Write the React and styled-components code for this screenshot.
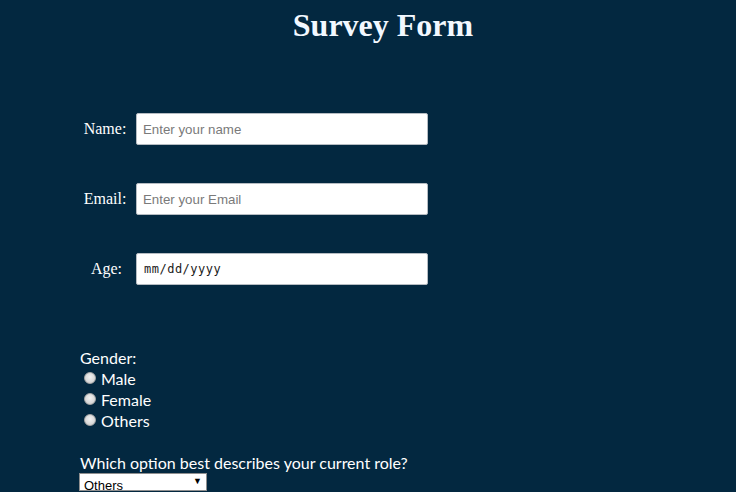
import styled, { createGlobalStyle } from 'styled-components'

const Global = createGlobalStyle`
  html, body {
    margin: 0;
    padding: 0;
    background: #032840;
    overflow: hidden;
  }
`

const Page = styled.div`
  width: 736px;
  height: 492px;
  background: #032840;
  color: #fff;
  overflow: hidden;
`

const Title = styled.h1`
  margin: 0;
  padding: 7px 0 0 30px;
  text-align: center;
  font-family: "Liberation Serif", serif;
  font-size: 32px;
  font-weight: bold;
  line-height: 37px;
  color: #f2f8ff;
`

const Fields = styled.div`
  display: flex;
  flex-direction: column;
  gap: 38px;
  padding: 69px 0 0 74px;
`

const Row = styled.div`
  display: grid;
  grid-template-columns: 62px 292px;
  align-items: center;
`

const Label = styled.label`
  font-family: "Liberation Serif", serif;
  font-size: 16px;
  text-align: center;
  padding-left: ${({ shift }) => shift || 0}px;
  color: #fff;
`

const TextInput = styled.input`
  box-sizing: border-box;
  width: 292px;
  height: 32px;
  margin: 0;
  padding: 0 6px;
  border: 1px solid #b6bcc2;
  border-radius: 2px;
  background: #fff;
  font-family: "Liberation Sans", Arial, sans-serif;
  font-size: 13.3px;
  color: #222;
  outline: none;

  &::placeholder {
    color: #7a7a7a;
  }
`

const DateInput = styled(TextInput)`
  font-family: "DejaVu Sans Mono", monospace;
  font-size: 12px;
  letter-spacing: 0.5px;
  color: #1a1a1a;
  padding-left: 7px;
`

const Section = styled.div`
  padding: 62px 0 0 80px;
  font-family: Lato, "Open Sans", sans-serif;
  font-size: 16px;
  color: #fff;
`

const GroupTitle = styled.div`
  line-height: 21px;
`

const Option = styled.label`
  display: flex;
  align-items: center;
  height: 21px;
  padding-left: 4px;
`

const Radio = styled.span`
  box-sizing: border-box;
  width: 12px;
  height: 12px;
  border-radius: 50%;
  background: radial-gradient(circle at 50% 40%, #f2f2f2, #c9c9c9);
  border: 1px solid #a8a8a8;
  margin-right: 5px;
  margin-top: -2px;
`

const Question = styled.div`
  margin-top: 22px;
  line-height: 20px;
`

const SelectBox = styled.div`
  position: relative;
  box-sizing: border-box;
  width: 128px;
  height: 18px;
  margin-top: 0;
  margin-left: -1px;
  background: #fff;
  border: 1px solid #8f8f8f;
`

const Select = styled.select`
  appearance: none;
  width: 100%;
  height: 100%;
  border: none;
  margin: 0;
  padding: 0 0 0 4px;
  background: transparent;
  font-family: "Liberation Sans", Arial, sans-serif;
  font-size: 13px;
  color: #000;
  outline: none;
`

const Arrow = styled.span`
  position: absolute;
  right: 4px;
  top: 1px;
  font-size: 9px;
  color: #000;
  pointer-events: none;
`

export default function App() {
  return (
    <Page>
      <Global />
      <Title>Survey Form</Title>
      <Fields>
        <Row>
          <Label>Name:</Label>
          <TextInput placeholder="Enter your name" />
        </Row>
        <Row>
          <Label>Email:</Label>
          <TextInput placeholder="Enter your Email" />
        </Row>
        <Row>
          <Label shift={3}>Age:</Label>
          <DateInput defaultValue="mm/dd/yyyy" />
        </Row>
      </Fields>
      <Section>
        <GroupTitle>Gender:</GroupTitle>
        <Option><Radio />Male</Option>
        <Option><Radio />Female</Option>
        <Option><Radio />Others</Option>
        <Question>Which option best describes your current role?</Question>
        <SelectBox>
          <Select defaultValue="Others">
            <option>Student</option>
            <option>Full Time Job</option>
            <option>Others</option>
          </Select>
          <Arrow>▼</Arrow>
        </SelectBox>
      </Section>
    </Page>
  )
}
